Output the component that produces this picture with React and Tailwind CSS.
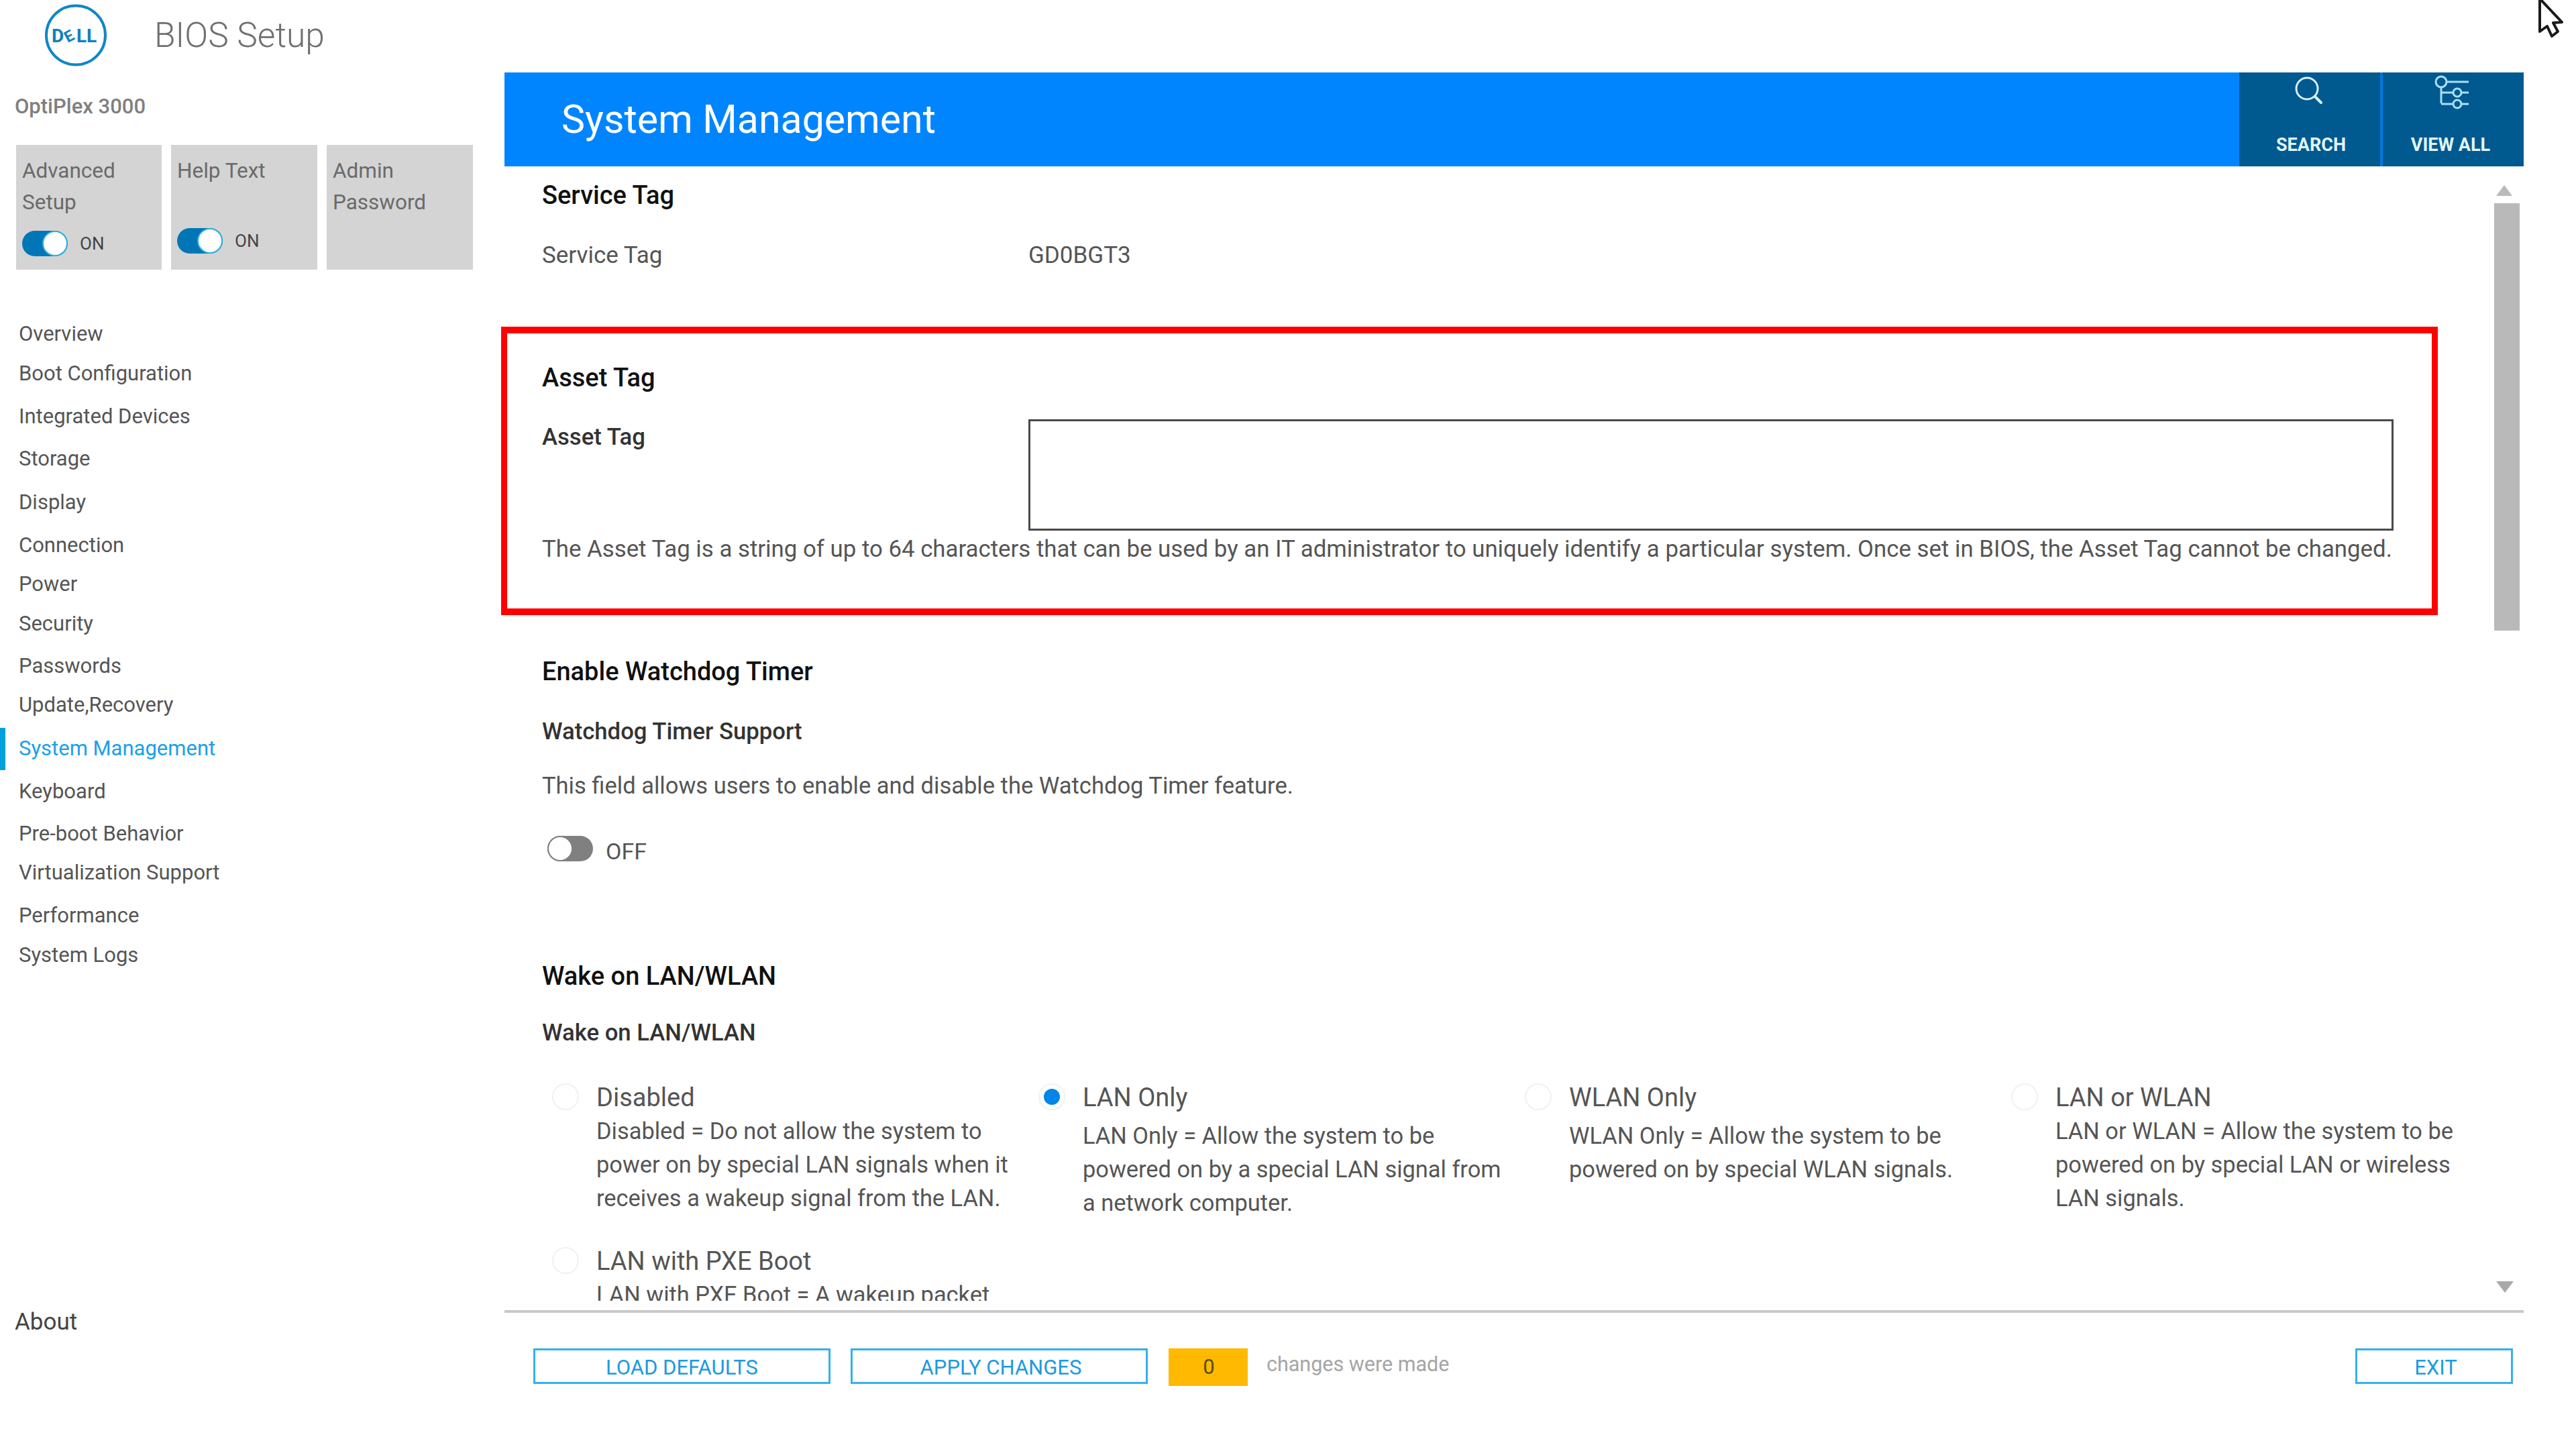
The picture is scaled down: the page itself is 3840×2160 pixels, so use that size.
import { useState } from 'react'

const navItems = [
  { name: 'Overview', gap: 'mt-[67px]' },
  { name: 'Boot Configuration', gap: 'mt-[1px]' },
  { name: 'Integrated Devices', gap: 'mt-[6px]' },
  { name: 'Storage', gap: 'mt-[5px]' },
  { name: 'Display', gap: 'mt-[7px]' },
  { name: 'Connection', gap: 'mt-[6px]' },
  { name: 'Power', gap: 'mt-[0px]' },
  { name: 'Security', gap: 'mt-[1px]' },
  { name: 'Passwords', gap: 'mt-[5px]' },
  { name: 'Update,Recovery', gap: 'mt-[0px]' },
  { name: 'System Management', gap: 'mt-[7px]', active: true },
  { name: 'Keyboard', gap: 'mt-[6px]' },
  { name: 'Pre-boot Behavior', gap: 'mt-[5px]' },
  { name: 'Virtualization Support', gap: 'mt-[0px]' },
  { name: 'Performance', gap: 'mt-[6px]' },
  { name: 'System Logs', gap: 'mt-[1px]' },
]

const wakeOptions = [
  {
    title: 'Disabled',
    desc: 'Disabled = Do not allow the system to power on by special LAN signals when it receives a wakeup signal from the LAN.',
    descGap: 'mt-0',
  },
  {
    title: 'LAN Only',
    desc: 'LAN Only = Allow the system to be powered on by a special LAN signal from a network computer.',
    descGap: 'mt-[7px]',
    checked: true,
  },
  {
    title: 'WLAN Only',
    desc: 'WLAN Only = Allow the system to be powered on by special WLAN signals.',
    descGap: 'mt-[7px]',
  },
  {
    title: 'LAN or WLAN',
    desc: 'LAN or WLAN = Allow the system to be powered on by special LAN or wireless LAN signals.',
    descGap: 'mt-0',
  },
  {
    title: 'LAN with PXE Boot',
    desc: 'LAN with PXE Boot = A wakeup packet',
    descGap: 'mt-0',
  },
]

function DellLogo() {
  return (
    <svg width="92" height="93" viewBox="0 0 92 93" className="shrink-0">
      <circle cx="46" cy="46.5" r="44" fill="none" stroke="#0f86c9" strokeWidth="4" />
      <g fill="#0f7fc0" fontFamily="Roboto, sans-serif" fontWeight="700" fontSize="28">
        <text x="10" y="57">D</text>
        <text x="0" y="0" fontSize="23" transform="translate(34 58) rotate(-28)">E</text>
        <text x="47" y="57">L</text>
        <text x="62" y="57">L</text>
      </g>
    </svg>
  )
}

function Toggle({ on }) {
  return (
    <div className={`flex h-[38px] w-[68px] items-center rounded-full ${on ? 'justify-end bg-[#0076b6]' : 'justify-start bg-[#808080]'}`}>
      <div className={`h-[38px] w-[38px] rounded-full bg-white ${on ? 'border-2 border-[#30b0e0]' : 'border-2 border-[#808080]'}`} />
    </div>
  )
}

function SideCard({ lines, toggle, toggleGap, width }) {
  return (
    <div className={`h-[186px] ${width} bg-[#d4d4d4] pl-[9px] pt-[15px] text-[31.5px] leading-[47px] text-[#6a6a6a]`}>
      <div className="h-[94px]">
        {lines.map(l => <div key={l}>{l}</div>)}
      </div>
      {toggle && (
        <div className={`flex items-center gap-[18px] ${toggleGap}`}>
          <Toggle on />
          <span className="text-[26px] leading-[38px] text-[#444]">ON</span>
        </div>
      )}
    </div>
  )
}

function OutlineButton({ label, width }) {
  return (
    <button className={`${width} h-[53px] border-[3px] border-[#35b0ee] pt-[4px] text-[31px] leading-none text-[#1c9be0]`}>
      {label}
    </button>
  )
}

function HeaderAction({ label, width, labelPad, children }) {
  return (
    <div className={`${width} flex flex-col items-center bg-[#00598f]`}>
      <div className="h-[84px] w-full">{children}</div>
      <div className={`h-[48px] text-[27px] font-bold leading-[48px] text-[#e2f6fa] ${labelPad}`}>{label}</div>
    </div>
  )
}

export default function App() {
  const [advanced] = useState(true)

  return (
    <div className="relative flex h-[2160px] w-[3840px] overflow-hidden bg-white font-['Roboto',sans-serif]">
      {/* sidebar */}
      <aside className="flex h-full w-[752px] shrink-0 flex-col pt-[6px]">
        <div className="flex h-[93px] items-center pl-[67px]">
          <DellLogo />
          <span className="ml-[71px] text-[51.5px] font-light text-[#6f6f6f]">BIOS Setup</span>
        </div>
        <div className="mt-[36px] h-[48px] pl-[22px] text-[31px] font-medium leading-[48px] text-[#808080]">OptiPlex 3000</div>
        <div className="mt-[33px] flex gap-[14px] pl-[24px]">
          <SideCard lines={['Advanced', 'Setup']} toggle={advanced} toggleGap="mt-[19px]" width="w-[217px]" />
          <SideCard lines={['Help Text']} toggle toggleGap="mt-[15px]" width="w-[218px]" />
          <SideCard lines={['Admin', 'Password']} width="w-[218px]" />
        </div>
        <nav>
          {navItems.map(item => (
            <div key={item.name} className={`relative flex h-[58px] items-center pl-[28px] text-[31px] ${item.gap} ${item.active ? 'text-[#1ba0ea]' : 'text-[#555]'}`}>
              {item.active && <span className="absolute left-0 top-[-2px] h-[63px] w-[8px] bg-[#00a0dc]" />}
              {item.name}
            </div>
          ))}
        </nav>
        <div className="mb-[164px] mt-auto h-[50px] pl-[22px] text-[35px] leading-[50px] text-[#444]">About</div>
      </aside>

      {/* main column */}
      <main className="flex h-full w-[3010px] shrink-0 flex-col pt-[108px]">
        <header className="flex h-[140px] shrink-0 bg-[#0085ff]">
          <h1 className="flex-1 pl-[85px] text-[59px] leading-[140px] text-white">System Management</h1>
          <HeaderAction label="SEARCH" width="w-[210px]" labelPad="pl-[4px]">
            <svg width="210" height="84" viewBox="0 0 210 84" fill="none" stroke="#d8f0f5" strokeWidth="3">
              <circle cx="101" cy="24" r="16" />
              <path d="M113 36l9 9" strokeLinecap="round" strokeWidth="4" />
            </svg>
          </HeaderAction>
          <div className="w-[4px] bg-[#0078e0]" />
          <HeaderAction label="VIEW ALL" width="w-[210px]" labelPad="pr-[8px]">
            <svg width="210" height="84" viewBox="0 0 210 84" fill="none" stroke="#a8e0f5" strokeWidth="3">
              <circle cx="87" cy="14" r="8" />
              <path d="M95 14h33M87 22v24M87 30h18M87 47h18M118 30h10M118 47h10" />
              <circle cx="111" cy="30" r="6" />
              <circle cx="111" cy="47" r="6" />
            </svg>
          </HeaderAction>
        </header>

        <div className="ml-[-8px] flex h-[1691px] shrink-0 overflow-hidden">
          <div className="w-[2974px] shrink-0 pl-[64px]">
            <h2 className="h-[86px] text-[38px] font-medium leading-[86px] text-[#111]">Service Tag</h2>
            <div className="flex h-[96px] items-center pb-[2px] text-[35px] text-[#555]">
              <span className="w-[725px]">Service Tag</span>
              <span>GD0BGT3</span>
            </div>
            <section className="ml-[-61px] mt-[57px] h-[430px] w-[2887px] border-x-[9px] border-y-[10px] border-[#ff0000] pl-[52px]">
              <h2 className="h-[128px] pt-[4px] text-[38px] font-medium leading-[124px] text-[#111]">Asset Tag</h2>
              <div className="flex">
                <span className="h-[52px] w-[725px] text-[34.7px] font-medium leading-[52px] text-[#333]">Asset Tag</span>
                <div className="h-[166px] w-[2035px] border-[3px] border-[#4a4a4a]" />
              </div>
              <p className="whitespace-nowrap text-[34.8px] leading-[54px] text-[#555]">
                The Asset Tag is a string of up to 64 characters that can be used by an IT administrator to uniquely identify a particular system. Once set in BIOS, the Asset Tag cannot be changed.
              </p>
            </section>

            <h2 className="mt-[54px] h-[60px] text-[38px] font-medium leading-[60px] text-[#111]">Enable Watchdog Timer</h2>
            <div className="mt-[29px] h-[60px] text-[34.7px] font-medium leading-[60px] text-[#333]">Watchdog Timer Support</div>
            <p className="mt-[21px] h-[60px] text-[34.5px] leading-[60px] text-[#555]">This field allows users to enable and disable the Watchdog Timer feature.</p>
            <div className="ml-[8px] mt-[33px] flex items-center gap-[19px]">
              <Toggle />
              <span className="pt-[10px] text-[34px] text-[#555]">OFF</span>
            </div>

            <h2 className="mt-[130px] h-[60px] text-[38px] font-medium leading-[60px] text-[#111]">Wake on LAN/WLAN</h2>
            <div className="mt-[24px] h-[60px] text-[34.7px] font-medium leading-[60px] text-[#333]">Wake on LAN/WLAN</div>
            <div className="mt-[42px] grid grid-cols-[repeat(4,725px)] auto-rows-[244px]">
              {wakeOptions.map(opt => (
                <div key={opt.title} className="flex">
                  <div className="ml-[15px] mt-[4px] flex h-[40px] w-[40px] shrink-0 items-center justify-center rounded-full border-2 border-[#f1f1f1]">
                    {opt.checked && <span className="h-[24px] w-[24px] rounded-full bg-[#0085e8]" />}
                  </div>
                  <div className="ml-[26px] w-[640px]">
                    <div className="h-[50px] text-[38px] leading-[50px] text-[#555]">{opt.title}</div>
                    <p className={`text-[34.4px] leading-[50px] text-[#555] ${opt.descGap}`}>{opt.desc}</p>
                  </div>
                </div>
              ))}
            </div>
          </div>

          {/* scrollbar */}
          <div className="relative w-[44px] shrink-0">
            <svg width="24" height="16" viewBox="0 0 24 16" className="ml-[3px] mt-[28px]">
              <path d="M12 0L24 16H0z" fill="#bababa" />
            </svg>
            <div className="mt-[11px] h-[637px] w-[38px] bg-[#b9b9b9]" />
            <svg width="26" height="17" viewBox="0 0 26 17" className="ml-[3px] mt-[970px]">
              <path d="M0 0H26L13 17z" fill="#a9a9a9" />
            </svg>
          </div>
        </div>

        <div className="mt-[14px] h-[4px] shrink-0 bg-[#c9c9c9]" />
        <footer className="flex items-start pl-[43px] pr-[16px] pt-[53px]">
          <OutlineButton label="LOAD DEFAULTS" width="w-[443px]" />
          <div className="ml-[30px]"><OutlineButton label="APPLY CHANGES" width="w-[443px] pl-[5px]" /></div>
          <div className="ml-[31px] flex h-[56px] w-[118px] items-center justify-center bg-[#ffb900] pl-[2px] text-[31px] text-[#5a4a10]">0</div>
          <span className="ml-[28px] text-[30.5px] leading-[48px] text-[#a5a5a5]">changes were made</span>
          <div className="ml-auto"><OutlineButton label="EXIT" width="w-[235px] pl-[5px]" /></div>
        </footer>
      </main>

      {/* mouse pointer */}
      <svg width="40" height="58" viewBox="0 0 40 58" className="absolute left-[3782px] top-0">
        <path d="M4 -2L37 33L24 34L31 47L22 54L15 39L4 47z" fill="#fff" stroke="#1a1a1a" strokeWidth="4" strokeLinejoin="round" />
      </svg>
    </div>
  )
}
